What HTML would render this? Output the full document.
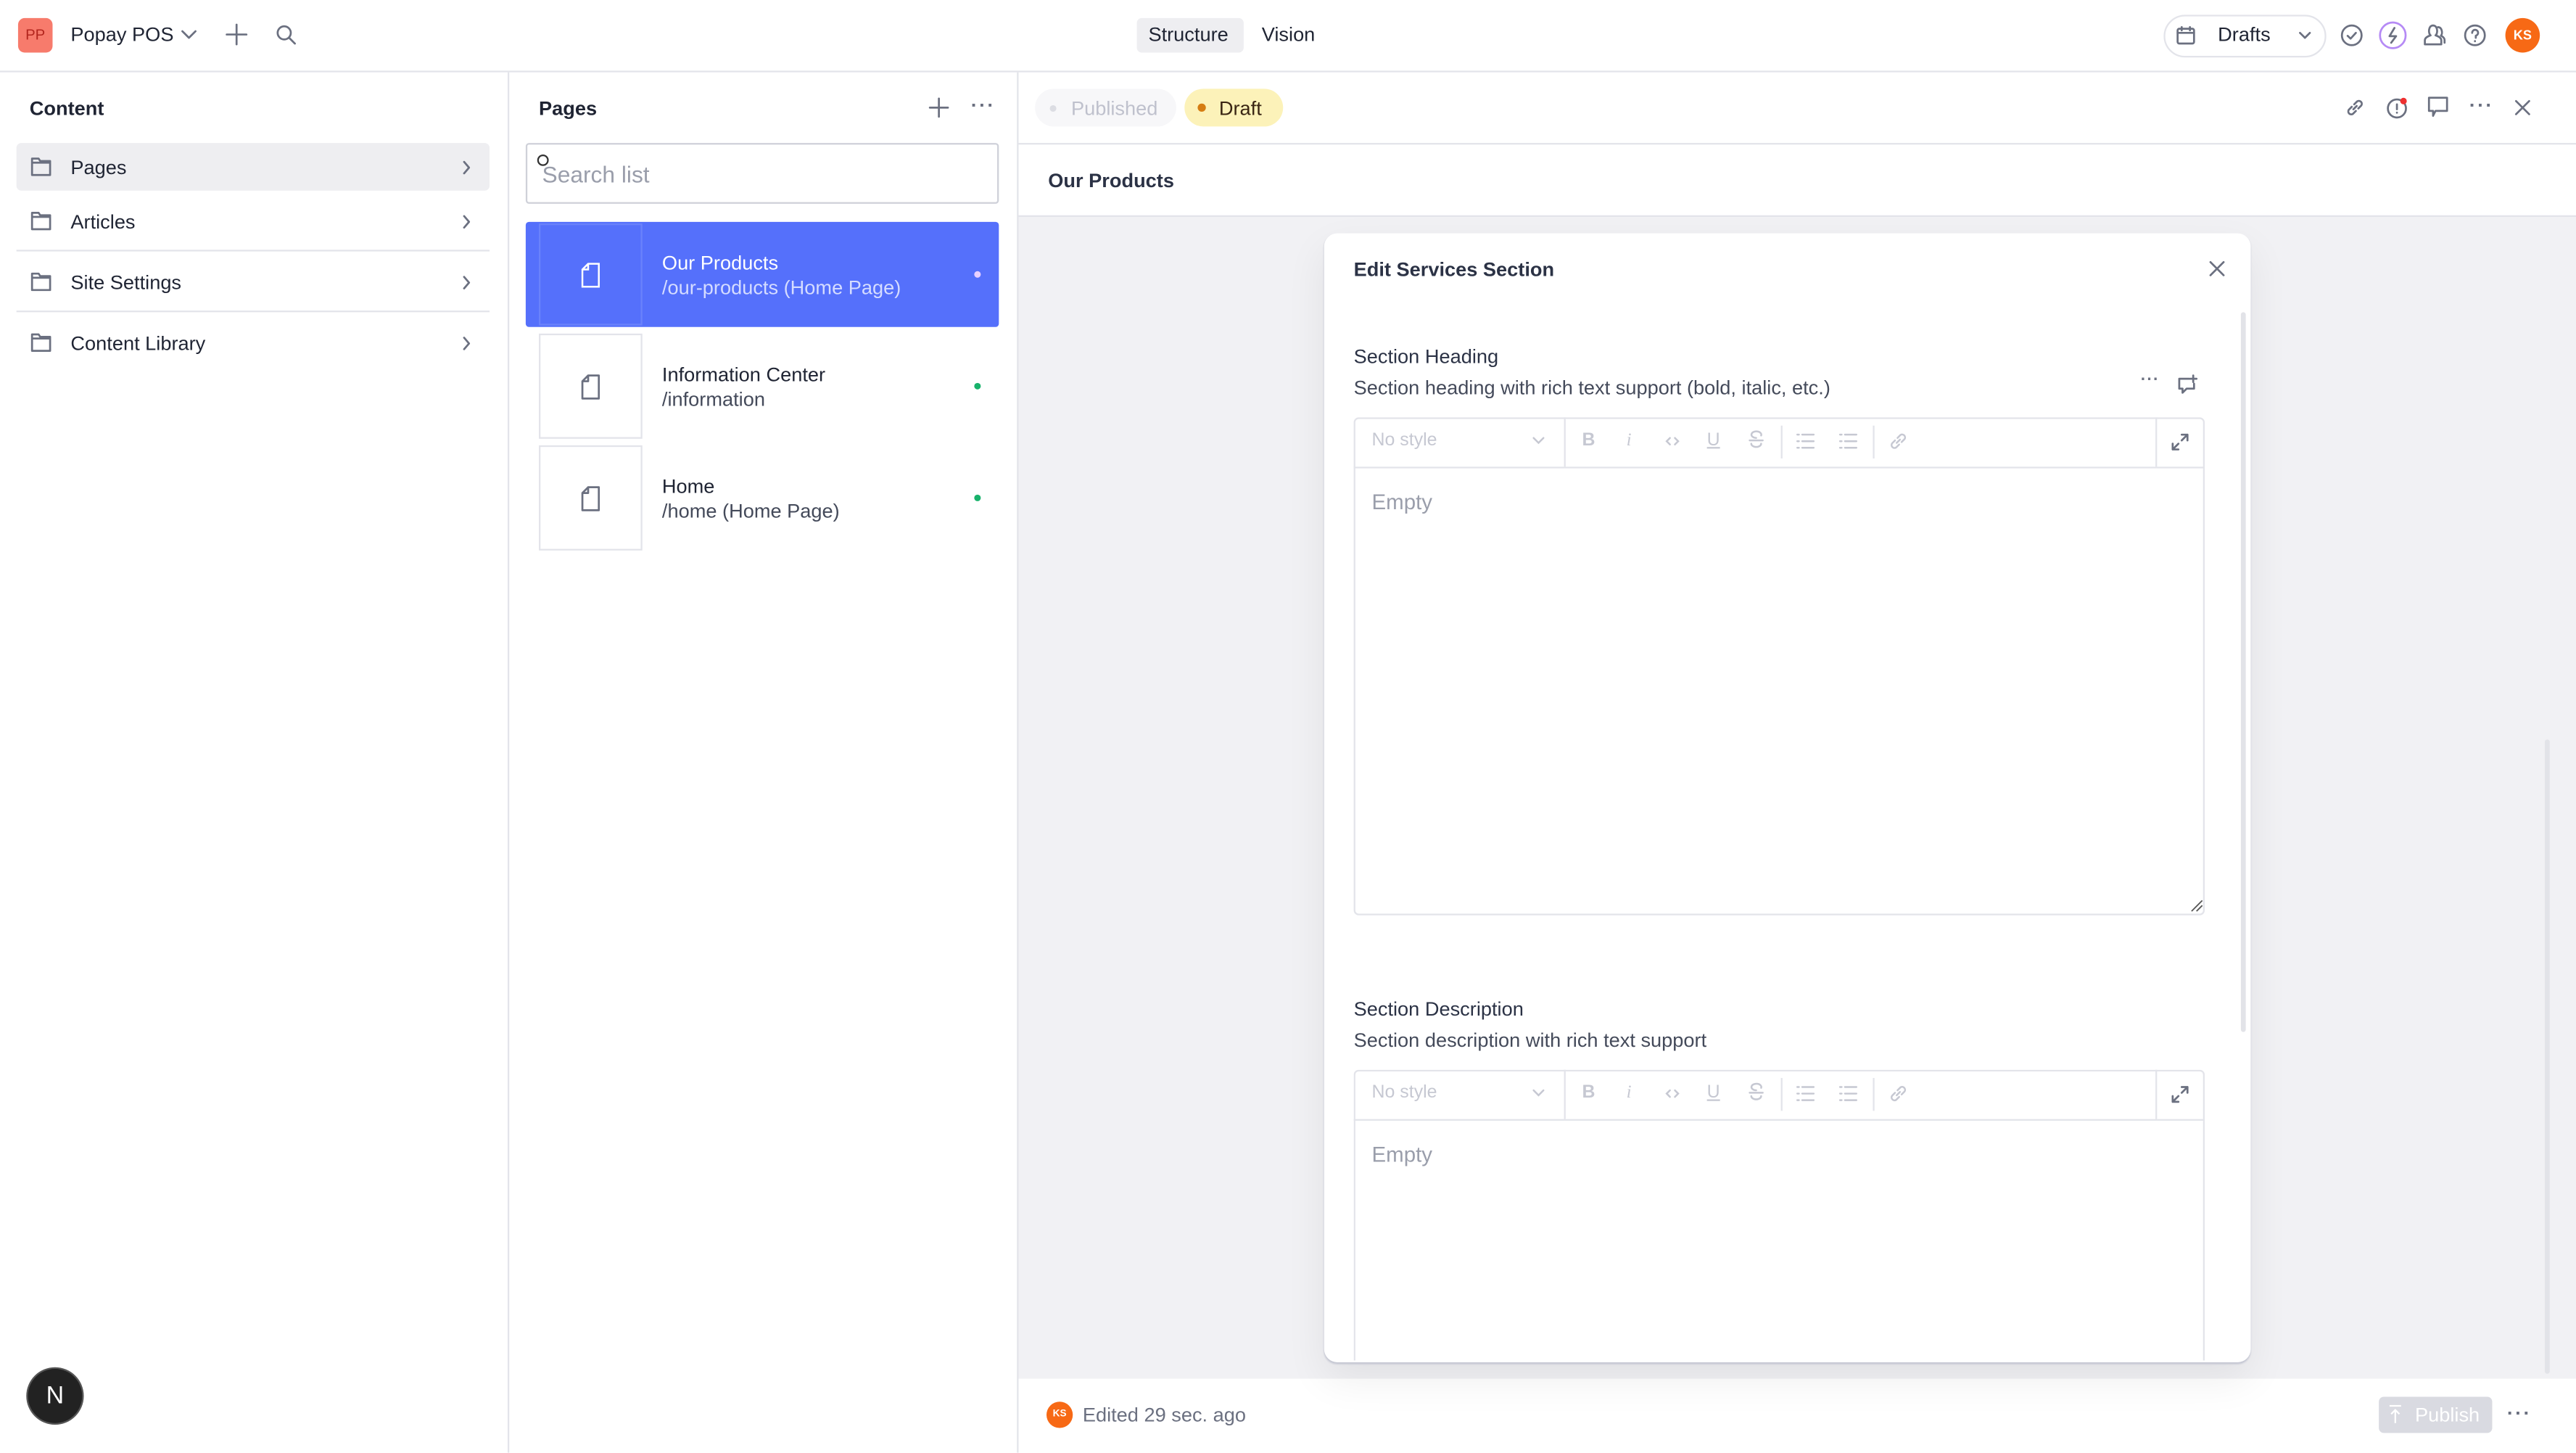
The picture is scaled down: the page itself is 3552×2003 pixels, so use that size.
<!DOCTYPE html>
<html><head><meta charset="utf-8"><style>
*{box-sizing:border-box;margin:0;padding:0}
html,body{width:3552px;height:2000px;overflow:hidden;background:#fff}
#r{position:absolute;left:0;top:0;width:1568px;height:883px;transform:scale(2.265306);transform-origin:0 0;font-family:"Liberation Sans",sans-serif;color:#1f2433;font-size:12px}
.a{position:absolute}
.b{font-weight:bold}
.hl{position:absolute;height:1px;background:#e3e4ea}
.vl{position:absolute;width:1px;background:#e3e4ea}
svg{position:absolute;overflow:visible}
.ic{fill:none;stroke:#6b7080;stroke-width:1.2;stroke-linecap:round;stroke-linejoin:round}
.tb{fill:none;stroke:#c6c8d2;stroke-width:1.1;stroke-linecap:round}
.tt{position:absolute;color:#c6c8d2;font-size:11px}
</style></head><body><div id="r">
<div class="a" style="left:11px;top:11px;width:21px;height:21px;background:#f77b6c;border-radius:4px;color:#b3261e;font-size:9px;text-align:center;line-height:21px">PP</div>
<div class="a" style="left:43px;top:14px;font-size:12px">Popay POS</div>
<svg style="left:110px;top:18px" width="10" height="6"><path class="ic" d="M1 1l4 4 4-4"/></svg>
<svg style="left:138px;top:15px" width="12" height="12"><path class="ic" d="M6 0v12M0 6h12"/></svg>
<svg style="left:168px;top:15px" width="12" height="12"><circle class="ic" cx="5" cy="5" r="4"/><path class="ic" d="M8 8l3.5 3.5"/></svg>
<div class="a" style="left:692px;top:11px;width:65px;height:21px;background:#eeeef1;border-radius:3px"></div>
<div class="a" style="left:699px;top:14px">Structure</div>
<div class="a" style="left:768px;top:14px">Vision</div>
<div class="a" style="left:1317px;top:9px;width:99px;height:26px;border:1px solid #e3e4ea;border-radius:13px"></div>
<svg style="left:1325px;top:16px" width="11" height="11"><rect class="ic" x=".5" y="1.5" width="10" height="9" rx="1"/><path class="ic" d="M.5 4h10M3 .5v2M8 .5v2"/></svg>
<div class="a" style="left:1350px;top:14px;font-size:12px">Drafts</div>
<svg style="left:1399px;top:19px" width="8" height="5"><path class="ic" d="M1 1l3 3 3-3"/></svg>
<svg style="left:1425px;top:15px" width="13" height="13"><circle class="ic" cx="6.5" cy="6.5" r="6"/><path class="ic" d="M4 6.8l1.8 1.7 3.2-3.5"/></svg>
<svg style="left:1448px;top:13px" width="17" height="17"><circle cx="8.5" cy="8.5" r="7.8" fill="none" stroke="#b58af5" stroke-width="1.2"/><path class="ic" d="M9.5 4l-3 5h4l-3 4"/></svg>
<svg style="left:1475px;top:14px" width="14" height="14"><path class="ic" d="M1 13v-2.5c0-1.5 2-2.5 3.5-3-1.5-1-1.5-6 1.5-6s3 5 1.5 6c1.5.5 3.5 1.5 3.5 3V13zM9 2.5c2.5 0 3 4 1.8 5.2 1 .5 2.2 1.2 2.2 2.6V12"/></svg>
<svg style="left:1500px;top:15px" width="13" height="13"><circle class="ic" cx="6.5" cy="6.5" r="6"/><path class="ic" d="M4.8 5a1.8 1.8 0 1 1 2.2 1.7V8M6.5 10v.1"/></svg>
<div class="a b" style="left:1525px;top:11px;width:21px;height:21px;border-radius:50%;background:#f76915;color:#fff;font-size:8px;text-align:center;line-height:21px">KS</div>
<div class="hl" style="left:0;top:43px;width:1568px"></div>
<div class="vl" style="left:309px;top:44px;height:840px"></div>
<div class="a b" style="left:18px;top:59px">Content</div>
<div class="a" style="left:10px;top:87px;width:288px;height:29px;background:#eeeef1;border-radius:3px"></div>
<div class="hl" style="left:10px;top:152px;width:288px"></div>
<div class="hl" style="left:10px;top:189px;width:288px"></div>
<svg style="left:19px;top:96px" width="12" height="11"><path class="ic" d="M.5 10.5V.5h4l1 1.5h6v8.5zM.5 3h11"/></svg>
<svg style="left:19px;top:129px" width="12" height="11"><path class="ic" d="M.5 10.5V.5h4l1 1.5h6v8.5zM.5 3h11"/></svg>
<svg style="left:19px;top:166px" width="12" height="11"><path class="ic" d="M.5 10.5V.5h4l1 1.5h6v8.5zM.5 3h11"/></svg>
<svg style="left:19px;top:203px" width="12" height="11"><path class="ic" d="M.5 10.5V.5h4l1 1.5h6v8.5zM.5 3h11"/></svg>
<div class="a" style="left:43px;top:95px">Pages</div>
<div class="a" style="left:43px;top:128px">Articles</div>
<div class="a" style="left:43px;top:165px">Site Settings</div>
<div class="a" style="left:43px;top:202px">Content Library</div>
<svg style="left:282px;top:98px" width="4" height="8"><path class="ic" d="M.5.5l3 3.5-3 3.5" stroke="#9a9eab"/></svg>
<svg style="left:282px;top:131px" width="4" height="8"><path class="ic" d="M.5.5l3 3.5-3 3.5" stroke="#9a9eab"/></svg>
<svg style="left:282px;top:168px" width="4" height="8"><path class="ic" d="M.5.5l3 3.5-3 3.5" stroke="#9a9eab"/></svg>
<svg style="left:282px;top:205px" width="4" height="8"><path class="ic" d="M.5.5l3 3.5-3 3.5" stroke="#9a9eab"/></svg>
<div class="a" style="left:17px;top:833px;width:33px;height:33px;border-radius:50%;background:#222;color:#fff;font-size:15px;text-align:center;line-height:33px;box-shadow:0 0 0 1px #555">N</div>
<div class="vl" style="left:619px;top:44px;height:840px"></div>
<div class="a b" style="left:328px;top:59px">Pages</div>
<svg style="left:566px;top:60px" width="11" height="11"><path class="ic" d="M5.5 0v11M0 5.5h11"/></svg>
<div class="a b" style="left:591px;top:57px;color:#6b7080;letter-spacing:1px">···</div>
<div class="a" style="left:320px;top:87px;width:288px;height:37px;border:1px solid #cfd1d9;border-radius:2px"></div>
<svg style="left:327px;top:94px" width="8" height="8"><circle cx="3.5" cy="3.5" r="3" fill="none" stroke="#333" stroke-width="1"/></svg>
<div class="a" style="left:330px;top:98px;font-size:14px;color:#9a9eab">Search list</div>
<div class="a" style="left:320px;top:135px;width:288px;height:64px;background:#5570fb;border-radius:2px"></div>
<div class="a" style="left:328px;top:136px;width:63px;height:62px;border:1px solid #6a82fb"></div>
<div class="a" style="left:328px;top:203px;width:63px;height:64px;border:1px solid #e3e4ea"></div>
<div class="a" style="left:328px;top:271px;width:63px;height:64px;border:1px solid #e3e4ea"></div>
<svg style="left:354px;top:160px" width="11" height="15"><path fill="none" stroke="#fff" stroke-width="1.1" d="M.5 14.5V4L4 .5h6.5v14zM.5 4H4V.5"/></svg>
<svg style="left:354px;top:228px" width="11" height="15"><path class="ic" stroke="#333a48" d="M.5 14.5V4L4 .5h6.5v14zM.5 4H4V.5"/></svg>
<svg style="left:354px;top:296px" width="11" height="15"><path class="ic" stroke="#333a48" d="M.5 14.5V4L4 .5h6.5v14zM.5 4H4V.5"/></svg>
<div class="a" style="left:403px;top:153px;color:#fff">Our Products</div>
<div class="a" style="left:403px;top:168px;color:#d5dcff">/our-products (Home Page)</div>
<div class="a" style="left:403px;top:221px">Information Center</div>
<div class="a" style="left:403px;top:236px;color:#444a5a">/information</div>
<div class="a" style="left:403px;top:289px">Home</div>
<div class="a" style="left:403px;top:304px;color:#444a5a">/home (Home Page)</div>
<div class="a" style="left:593px;top:165px;width:4px;height:4px;border-radius:50%;background:#e8d0ff"></div>
<div class="a" style="left:593px;top:233px;width:4px;height:4px;border-radius:50%;background:#18b26b"></div>
<div class="a" style="left:593px;top:301px;width:4px;height:4px;border-radius:50%;background:#18b26b"></div>
<div class="a" style="left:630px;top:54px;width:86px;height:23px;border-radius:12px;background:#f7f7f9"></div>
<div class="a" style="left:639px;top:64px;width:4px;height:4px;border-radius:50%;background:#dcdde3"></div>
<div class="a" style="left:652px;top:59px;color:#bfc1cd">Published</div>
<div class="a" style="left:721px;top:54px;width:60px;height:23px;border-radius:12px;background:#fcf2b9"></div>
<div class="a" style="left:729px;top:63px;width:5px;height:5px;border-radius:50%;background:#d57d12"></div>
<div class="a" style="left:742px;top:59px;color:#3a2614">Draft</div>
<svg style="left:1428px;top:60px" width="11" height="11"><path class="ic" d="M4.5 6.5l2-2M3.5 5l-1.8 1.8a1.8 1.8 0 0 0 2.5 2.5L6 7.5M7.5 6l1.8-1.8a1.8 1.8 0 0 0-2.5-2.5L5 3.5"/></svg>
<svg style="left:1453px;top:59px" width="13" height="13"><circle class="ic" cx="6" cy="7" r="5.5"/><path class="ic" d="M6 4.5v3M6 9.5v.1"/><circle cx="10" cy="2.5" r="2" fill="#ee3030"/></svg>
<svg style="left:1478px;top:59px" width="12" height="13"><path class="ic" d="M.5.5h11v8H4.5L3 11.5v-3H.5z"/></svg>
<div class="a b" style="left:1503px;top:57px;color:#6b7080;letter-spacing:1px">···</div>
<svg style="left:1531px;top:61px" width="9" height="9"><path class="ic" d="M.5.5l8 8M8.5.5l-8 8"/></svg>
<div class="hl" style="left:620px;top:87px;width:948px"></div>
<div class="a b" style="left:638px;top:103px;color:#2b3245">Our Products</div>
<div class="hl" style="left:620px;top:131px;width:948px"></div>
<div class="a" style="left:620px;top:132px;width:948px;height:707px;background:#f1f1f4"></div>
<div class="a" style="left:1549px;top:450px;width:3px;height:386px;background:#e2e3e8;border-radius:2px"></div>
<div class="a" style="left:806px;top:142px;width:564px;height:687px;background:#fff;border-radius:8px;box-shadow:0 1px 1px #c4c6d2,0 10px 25px rgba(0,0,0,.07)"></div>
<div class="a b" style="left:824px;top:157px;color:#2b3245">Edit Services Section</div>
<svg style="left:1345px;top:159px" width="9" height="9"><path class="ic" d="M.5.5l8 8M8.5.5l-8 8"/></svg>
<div class="a" style="left:1364px;top:190px;width:3px;height:438px;background:#e2e3e8;border-radius:2px"></div>
<div class="a" style="left:824px;top:210px;color:#2b3245">Section Heading</div>
<div class="a" style="left:824px;top:229px;color:#444a5a">Section heading with rich text support (bold, italic, etc.)</div>
<div class="a b" style="left:1303px;top:226px;color:#6b7080;font-size:10px;letter-spacing:.5px">···</div>
<svg style="left:1326px;top:228px" width="12" height="12"><path class="ic" d="M.5 2.5h6M.5 2.5v6h2v2.5l2.5-2.5h4.5V5.5M9 .5v4M7 2.5h4"/></svg>
<div class="a" style="left:824px;top:607px;color:#2b3245">Section Description</div>
<div class="a" style="left:824px;top:626px;color:#444a5a">Section description with rich text support</div>
<div class="a" style="left:824px;top:254px;width:518px;height:303px;border:1px solid #e3e4ea;border-radius:3px"></div>
<div class="hl" style="left:824px;top:284px;width:518px"></div>
<div class="a" style="left:824px;top:651px;width:518px;height:177px;border:1px solid #e3e4ea;border-bottom:none;border-radius:3px 3px 0 0;background:#fff"></div>
<div class="hl" style="left:824px;top:681px;width:518px"></div>
<div class="a" style="left:835px;top:298px;font-size:13px;color:#9a9eab">Empty</div>
<div class="a" style="left:835px;top:695px;font-size:13px;color:#9a9eab">Empty</div>
<svg style="left:1333px;top:547px" width="8" height="8"><path d="M1 7.5L7.5 1M4 7.5L7.5 4" stroke="#555" stroke-width=".8"/></svg>
<div class="a b" style="left:637px;top:853px;width:16px;height:16px;border-radius:50%;background:#f76915;color:#fff;font-size:6px;text-align:center;line-height:16px">KS</div>
<div class="a" style="left:659px;top:854px;color:#6b7080">Edited 29 sec. ago</div>
<div class="a" style="left:1448px;top:850px;width:69px;height:22px;background:#d9dae1;border-radius:3px"></div>
<svg style="left:1454px;top:855px" width="8" height="12"><path fill="none" stroke="#fff" stroke-width="1" d="M.5.5h7M4 11V3M1.5 5.5L4 3l2.5 2.5"/></svg>
<div class="a" style="left:1470px;top:854px;color:#fff">Publish</div>
<div class="a b" style="left:1526px;top:853px;color:#6b7080;letter-spacing:1px">···</div>
<div class="vl" style="left:952px;top:254px;height:30px"></div><div class="vl" style="left:1084px;top:259px;height:20px"></div><div class="vl" style="left:1140px;top:259px;height:20px"></div><div class="vl" style="left:1312px;top:254px;height:30px"></div>
<div class="tt" style="left:835px;top:262px">No style</div>
<svg style="left:933px;top:266px" width="7" height="4"><path class="tb" d="M.5.5l3 3 3-3"/></svg>
<div class="tt b" style="left:963px;top:262px">B</div><div class="tt" style="left:990px;top:262px;font-style:italic;font-family:'Liberation Serif',serif">i</div>
<svg style="left:1014px;top:266px" width="8" height="5"><path class="tb" d="M2.5.5L.5 2.5l2 2M5.5.5l2 2-2 2"/></svg>
<div class="tt" style="left:1039px;top:262px;text-decoration:underline">U</div>
<svg style="left:1065px;top:263px" width="8" height="10"><path class="tb" d="M7 2a3 2 0 1 0-3 1.5M1 7a3 2 0 0 0 6 0M0 5h8"/></svg>
<svg style="left:1094px;top:264px" width="10" height="9"><path class="tb" d="M0 .5h1M0 4.5h1M0 8.5h1M3 .5h7M3 4.5h7M3 8.5h7"/></svg>
<svg style="left:1120px;top:264px" width="10" height="9"><path class="tb" d="M0 .5h1M0 4.5h1M0 8.5h1M3 .5h7M3 4.5h7M3 8.5h7"/></svg>
<svg style="left:1150px;top:263px" width="11" height="11"><path class="tb" d="M4.5 6.5l2-2M3.5 5l-1.8 1.8a1.8 1.8 0 0 0 2.5 2.5L6 7.5M7.5 6l1.8-1.8a1.8 1.8 0 0 0-2.5-2.5L5 3.5"/></svg>
<svg style="left:1322px;top:264px" width="10" height="10"><path class="ic" stroke="#555" d="M6 .5h3.5V4M9.5.5L6 4M4 9.5H.5V6M.5 9.5L4 6"/></svg>
<div class="vl" style="left:952px;top:651px;height:30px"></div><div class="vl" style="left:1084px;top:656px;height:20px"></div><div class="vl" style="left:1140px;top:656px;height:20px"></div><div class="vl" style="left:1312px;top:651px;height:30px"></div>
<div class="tt" style="left:835px;top:659px">No style</div>
<svg style="left:933px;top:663px" width="7" height="4"><path class="tb" d="M.5.5l3 3 3-3"/></svg>
<div class="tt b" style="left:963px;top:659px">B</div><div class="tt" style="left:990px;top:659px;font-style:italic;font-family:'Liberation Serif',serif">i</div>
<svg style="left:1014px;top:663px" width="8" height="5"><path class="tb" d="M2.5.5L.5 2.5l2 2M5.5.5l2 2-2 2"/></svg>
<div class="tt" style="left:1039px;top:659px;text-decoration:underline">U</div>
<svg style="left:1065px;top:660px" width="8" height="10"><path class="tb" d="M7 2a3 2 0 1 0-3 1.5M1 7a3 2 0 0 0 6 0M0 5h8"/></svg>
<svg style="left:1094px;top:661px" width="10" height="9"><path class="tb" d="M0 .5h1M0 4.5h1M0 8.5h1M3 .5h7M3 4.5h7M3 8.5h7"/></svg>
<svg style="left:1120px;top:661px" width="10" height="9"><path class="tb" d="M0 .5h1M0 4.5h1M0 8.5h1M3 .5h7M3 4.5h7M3 8.5h7"/></svg>
<svg style="left:1150px;top:660px" width="11" height="11"><path class="tb" d="M4.5 6.5l2-2M3.5 5l-1.8 1.8a1.8 1.8 0 0 0 2.5 2.5L6 7.5M7.5 6l1.8-1.8a1.8 1.8 0 0 0-2.5-2.5L5 3.5"/></svg>
<svg style="left:1322px;top:661px" width="10" height="10"><path class="ic" stroke="#555" d="M6 .5h3.5V4M9.5.5L6 4M4 9.5H.5V6M.5 9.5L4 6"/></svg>
</div></body></html>
